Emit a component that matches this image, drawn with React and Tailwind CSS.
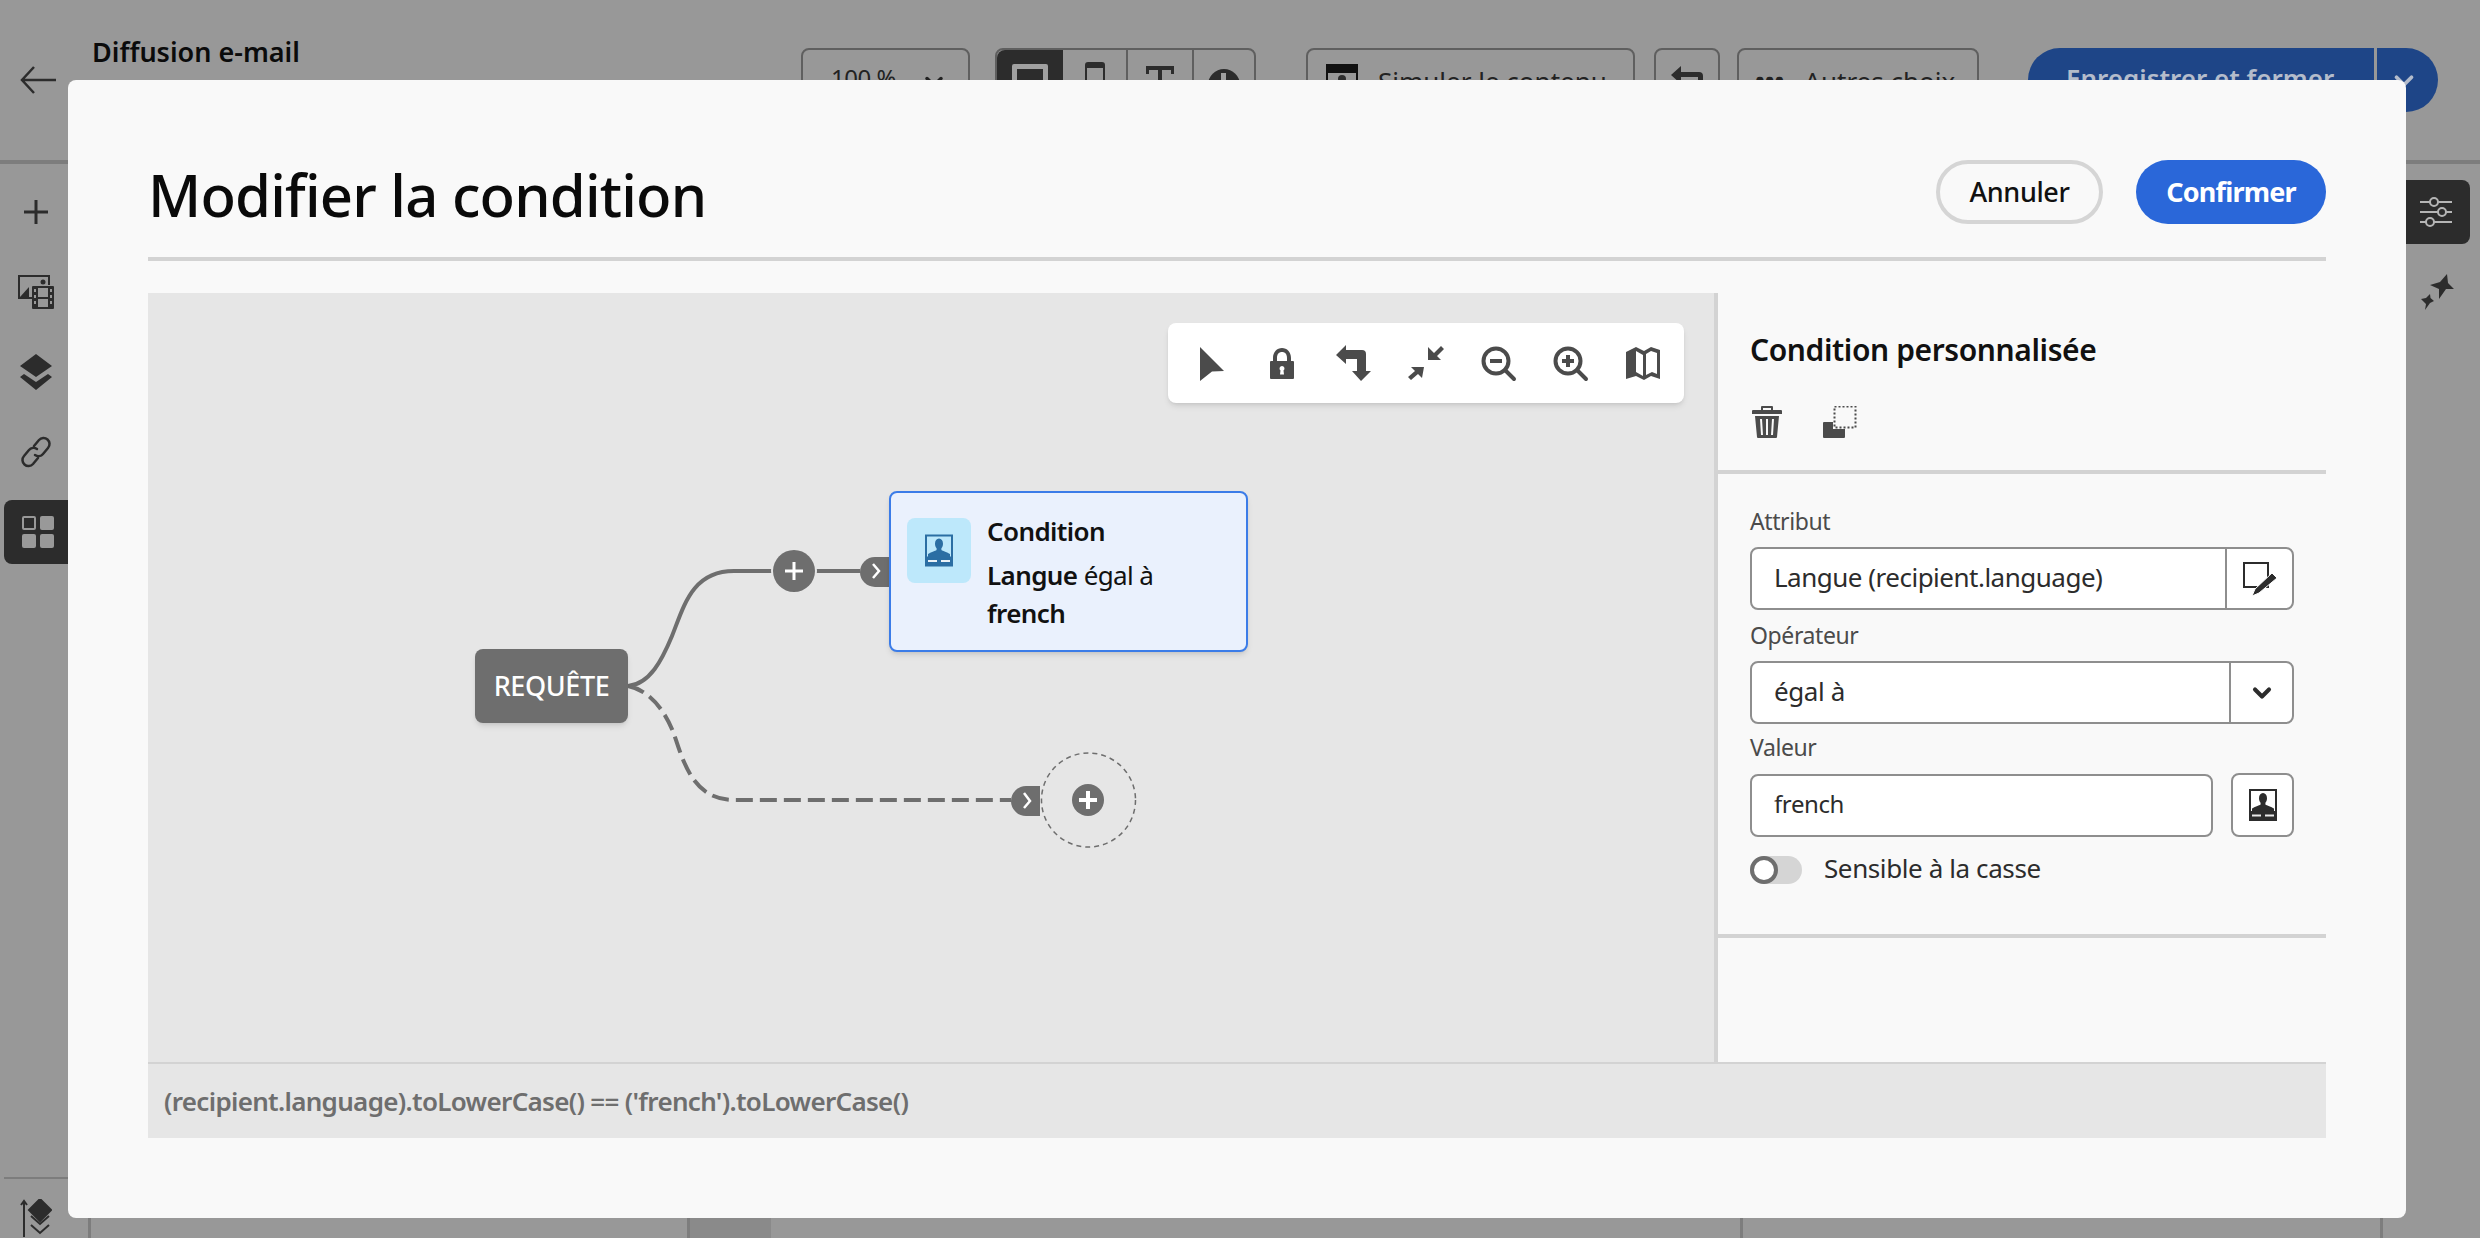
import { ChevronDown } from 'lucide-react';

const font = 'font-["Noto_Sans",sans-serif]';

function CardIcon({ className }) {
  return (
    <svg viewBox="0 0 28 32" className={className} fill="currentColor">
      <path fillRule="evenodd" d="M0 0h28v32H0zM2 2v20h24V2z" />
      <path d="M14 4c2.400 0 4 2.200 4 5.200 0 2-.8 3.800-1.600 4.600v1.600c1.400 1 6 2.400 8.600 4V24H3v-4.600c2.600-1.600 7.200-3 8.600-4v-1.600C10.800 13 10 11.200 10 9.200 10 6.200 11.600 4 14 4z" />
      <path fill="#fff" d="M3 25.500h9v2H3zM16 25.500h9v2h-9z" opacity="0.9" />
    </svg>
  );
}

function ToolbarIcons() {
  return (
    <svg viewBox="1168 323 516 80" className="absolute inset-0 h-full w-full" fill="#4b4b4b">
      <path d="M1200 347l24 24-12 .5-12 9.500z" />
      <path fillRule="evenodd" d="M1273 361v-3c0-6 4-10 9-10s9 4 9 10v3h2a1 1 0 0 1 1 1v16a1 1 0 0 1-1 1h-22a1 1 0 0 1-1-1v-16a1 1 0 0 1 1-1zm4 0h10v-3c0-4-2-6-5-6s-5 2-5 6zm5 5a2.500 2.500 0 0 0-1.500 4.500l-.5 4h4l-.5-4A2.500 2.500 0 0 0 1282 366z" />
      <path d="M1336 355l10-10v5h16a4 4 0 0 1 4 4v17h5l-10 10-9-10h5v-12h-11v5z" />
      <path d="M1428 349v13h13l-4-4 7-7-3-3-7 7zM1424 369h-13l4 4-7 6 3 3 7-6 4 4z" transform="translate(0 -2)" />
      <g fill="none" stroke="#4b4b4b" strokeWidth="4" strokeLinecap="round">
        <circle cx="1496" cy="361" r="12.500" />
        <path d="M1505 370l9 9" />
        <circle cx="1568" cy="361" r="12.500" />
        <path d="M1577 370l9 9" />
      </g>
      <path d="M1490 359h12v4h-12zM1562 359h12v4h-12zM1566 355h4v12h-4z" />
      <path fillRule="evenodd" d="M1626 352l10-5 8 4 7-4 9 3v29l-9-3-7 4-8-4-10 3zm10-1v21l7 4v-21zm15 0l-5 3v21l6-3 5 2v-21z" />
    </svg>
  );
}

function Graph() {
  return (
    <>
      <svg viewBox="148 293 1566 769" className="absolute inset-0 h-full w-full">
        <path d="M628 686C650 684 662 660 672 636C684 606 692 571 734 571H860" fill="none" stroke="#6e6e6e" strokeWidth="4" />
        <path d="M628 686C648 690 664 708 674 734C684 764 694 800 734 800H1011" fill="none" stroke="#6e6e6e" strokeWidth="4" strokeDasharray="17 7" />
        <circle cx="794" cy="571" r="23" fill="#e6e6e6" />
        <circle cx="794" cy="571" r="21" fill="#6e6e6e" />
        <path d="M794 562v18M785 571h18" stroke="#fff" strokeWidth="3" />
        <path d="M889 557h-14a15 15 0 0 0 0 30h14z" fill="#6e6e6e" />
        <path d="M873 564l6 7-6 7" fill="none" stroke="#fff" strokeWidth="2.500" />
        <path d="M1040 786h-14a15 15 0 0 0 0 30h14z" fill="#6e6e6e" />
        <path d="M1024 793l6 8-6 7" fill="none" stroke="#fff" strokeWidth="2.500" />
        <circle cx="1088.500" cy="800" r="47" fill="#e6e6e6" stroke="#6e6e6e" strokeWidth="1.500" strokeDasharray="5 4" />
        <circle cx="1088" cy="800" r="16" fill="#6e6e6e" />
        <path d="M1088 791v18M1079 800h18" stroke="#fff" strokeWidth="4" />
      </svg>
      <div className="absolute left-[327px] top-[356px] flex h-[74px] w-[153px] items-center justify-center rounded-lg bg-[#6e6e6e] text-[27px] font-medium text-white shadow-md">
        REQUÊTE
      </div>
      <div className="absolute left-[741px] top-[198px] flex h-[161px] w-[359px] rounded-lg border-2 border-[#3b7ce8] bg-[#eaf1fd] pl-[16px] shadow-md">
        <div className="mt-[25px] flex h-[65px] w-[64px] items-center justify-center rounded-lg bg-[#bde8fb] text-[#2b6ea3]">
          <CardIcon className="h-[33px] w-[28px]" />
        </div>
        <div className="ml-[16px] pt-[18px] text-[26px] leading-[40px] tracking-[-0.6px] text-[#111]">
          <div className="font-semibold">Condition</div>
          <div className="mt-[4px]">
            <span className="font-semibold">Langue</span> égal à
          </div>
          <div className="-mt-[2px] font-semibold">french</div>
        </div>
      </div>
    </>
  );
}

function Field({ label, className, children }) {
  return (
    <div className={className}>
      <div className="h-[32px] text-[23px] leading-[32px] text-[#4b4b4b]">{label}</div>
      {children}
    </div>
  );
}

function Modal() {
  return (
    <div className="absolute left-[68px] top-[80px] flex h-[1138px] w-[2338px] flex-col rounded-lg bg-[#f9f9f9] px-[80px] pb-[80px] pt-[80px] tracking-[-0.4px]">
      <div className="flex h-[64px] items-center justify-between">
        <h1 className="mt-[6px] text-[58px] font-medium leading-[64px] tracking-[-0.8px] text-[#0a0a0a]">Modifier la condition</h1>
        <div className="flex gap-[33px]">
          <button className="h-[64px] w-[167px] rounded-full border-4 border-[#d5d5d5] text-[27px] font-medium text-[#111]">Annuler</button>
          <button className="h-[64px] w-[190px] rounded-full bg-[#2a67d9] text-[27px] font-bold tracking-[-0.8px] text-white">Confirmer</button>
        </div>
      </div>
      <div className="mt-[33px] h-[4px] bg-[#d3d3d3]" />
      <div className="mt-[32px] flex flex-1">
        <div className="relative w-[1566px] bg-[#e6e6e6]">
          <div className="absolute left-[1020px] top-[30px] h-[80px] w-[516px] rounded-lg bg-white shadow-md">
            <ToolbarIcons />
          </div>
          <Graph />
        </div>
        <div className="flex flex-1 flex-col border-l-4 border-[#d3d3d3]">
          <div className="h-[177px] px-[32px] pt-[36px]">
            <h2 className="text-[30px] font-semibold leading-[42px] text-[#111]">Condition personnalisée</h2>
            <div className="ml-[2px] mt-[35px] flex gap-[41px]">
              <svg viewBox="0 0 30 32" className="h-[32px] w-[30px]" fill="#4b4b4b">
                <path fillRule="evenodd" d="M10 0h10a1 1 0 0 1 1 1v3h8a1 1 0 0 1 1 1v3H0V5a1 1 0 0 1 1-1h8V1a1 1 0 0 1 1-1zm1 2v2h8V2zM3 10h24l-2 21a1 1 0 0 1-1 1H6a1 1 0 0 1-1-1zm5 3l1 16h2l-1-16zm6 0v16h2V13zm6 0l-1 16h2l1-16z" />
              </svg>
              <svg viewBox="0 0 34 32" className="h-[32px] w-[34px]">
                <rect x="11.500" y="0.500" width="21" height="21" fill="none" stroke="#4b4b4b" strokeWidth="2" strokeDasharray="2 2" />
                <path d="M0 17a1 1 0 0 1 1-1h9v7h12v8a1 1 0 0 1-1 1H1a1 1 0 0 1-1-1z" fill="#4b4b4b" />
              </svg>
            </div>
          </div>
          <div className="h-[4px] bg-[#d3d3d3]" />
          <div className="h-[460px] pl-[32px] pr-[32px] pt-[31px] text-[26px] text-[#2c2c2c]">
            <Field label="Attribut">
              <div className="mt-[10px] flex h-[63px] items-center rounded-lg border-2 border-[#8e8e8e] bg-white">
                <div className="-mt-[2px] flex-1 pl-[22px] tracking-[-0.5px]">Langue (recipient.language)</div>
                <div className="flex h-full w-[67px] items-center justify-center border-l-2 border-[#8e8e8e]">
                  <svg viewBox="0 0 34 34" className="h-[34px] w-[34px]">
                    <path d="M1 1h24v24H1z" fill="none" stroke="#2c2c2c" strokeWidth="2" />
                    <path d="M29 11l5 5-18 15-7 3 3-7z" fill="#2c2c2c" stroke="#fff" strokeWidth="1" />
                  </svg>
                </div>
              </div>
            </Field>
            <Field label="Opérateur" className="mt-[9px]">
              <div className="mt-[10px] flex h-[63px] items-center rounded-lg border-2 border-[#8e8e8e] bg-white">
                <div className="-mt-[3px] flex-1 pl-[22px]">égal à</div>
                <div className="flex h-full w-[63px] items-center justify-center border-l-2 border-[#8e8e8e]">
                  <ChevronDown className="h-[28px] w-[28px] text-[#2c2c2c]" strokeWidth={3.5} />
                </div>
              </div>
            </Field>
            <Field label="Valeur" className="mt-[7px]">
              <div className="mt-[10px] flex items-start gap-[18px]">
                <div className="mt-[1px] flex h-[63px] w-[463px] items-center rounded-lg border-2 border-[#8e8e8e] bg-white pb-[3px] pl-[22px] text-[24px]">french</div>
                <div className="flex h-[64px] w-[63px] items-center justify-center rounded-lg border-2 border-[#8e8e8e] bg-white text-[#2c2c2c]">
                  <CardIcon className="h-[32px] w-[28px]" />
                </div>
              </div>
            </Field>
            <div className="mt-[19px] flex h-[28px] items-center">
              <div className="h-[28px] w-[52px] rounded-full bg-[#d5d5d5]">
                <div className="h-[28px] w-[28px] rounded-full border-4 border-[#6e6e6e] bg-white" />
              </div>
              <span className="-mt-[3px] ml-[22px] text-[26px]">Sensible à la casse</span>
            </div>
          </div>
          <div className="h-[4px] bg-[#d3d3d3]" />
        </div>
      </div>
      <div className="flex h-[76px] items-center border-t-2 border-[#d3d3d3] bg-[#e6e6e6] pl-[16px] text-[26px] font-semibold tracking-[-0.68px] text-[#6e6e6e]">
        (recipient.language).toLowerCase() == ('french').toLowerCase()
      </div>
    </div>
  );
}

function Background() {
  return (
    <div className="flex h-full flex-col">
      <div className="flex h-[164px] border-b-4 border-[#7d7d7d] pl-[20px]">
        <svg viewBox="0 0 36 28" className="mt-[66px] h-[28px] w-[36px]" fill="none" stroke="#2c2c2c" strokeWidth="2.500">
          <path d="M36 14H2M14 1L2 14l12 13" />
        </svg>
        <div className="ml-[36px] mt-[32px] w-[709px] text-[27px] font-semibold leading-[40px] text-[#0b0b0b]">Diffusion e-mail</div>
        <div className="mt-[48px] flex h-[64px] w-[169px] items-start justify-center gap-[24px] rounded-lg border-2 border-[#5f5f5f] pl-[8px] pt-[12px] text-[24px] leading-[32px] tracking-[-0.5px] text-[#222]">
          100 %
          <ChevronDown className="mt-[6px] h-[28px] w-[28px]" strokeWidth={3} />
        </div>
        <div className="ml-[25px] mt-[48px] flex h-[64px] w-[261px] rounded-lg border-2 border-[#5f5f5f]">
          <div className="flex w-[66px] justify-center rounded-l-lg bg-[#2c2c2c] pt-[14px]">
            <div className="h-[30px] w-[36px] rounded-[2px] border-[5px] border-[#a0a0a0] bg-[#2c2c2c]" />
          </div>
          <div className="flex w-[65px] justify-center border-r-2 border-[#5f5f5f] pt-[12px]">
            <div className="h-[34px] w-[20px] rounded-[3px] border-2 border-t-[6px] border-[#2c2c2c]" />
          </div>
          <div className="flex w-[66px] justify-center border-r-2 border-[#5f5f5f] pt-[16px]">
            <svg viewBox="0 0 28 30" className="h-[30px] w-[28px]" fill="#2c2c2c">
              <path d="M0 0h28v8h-3V4h-9v26h-4V4H3v4H0z" />
            </svg>
          </div>
          <div className="flex flex-1 justify-center pt-[19px]">
            <svg viewBox="0 0 32 32" className="h-[32px] w-[32px]">
              <circle cx="16" cy="16" r="16" fill="#2c2c2c" />
              <path d="M13 4h5v8h-5z" fill="#a0a0a0" />
            </svg>
          </div>
        </div>
        <div className="ml-[50px] mt-[48px] flex h-[64px] w-[329px] gap-[20px] rounded-lg border-2 border-[#5f5f5f] pl-[18px] pt-[12px] text-[26px] text-[#222]">
          <svg viewBox="0 0 32 34" className="mt-[2px] h-[34px] w-[32px]">
            <path d="M0 0h32v8H0z" fill="#111" />
            <path d="M1 8h30v26H1z" fill="none" stroke="#111" strokeWidth="2" />
            <circle cx="16" cy="15" r="4" fill="#2c2c2c" />
          </svg>
          Simuler le contenu
        </div>
        <div className="ml-[19px] mt-[48px] h-[64px] w-[66px] rounded-lg border-2 border-[#5f5f5f] pl-[15px] pt-[16px]">
          <svg viewBox="0 0 32 30" className="h-[30px] w-[32px]" fill="#2c2c2c">
            <path d="M0 9L10 0v6h18a4 4 0 0 1 4 4v20h-5V11H10v7z" />
          </svg>
        </div>
        <div className="ml-[17px] mt-[48px] flex h-[64px] w-[242px] gap-[20px] rounded-lg border-2 border-[#5f5f5f] pl-[16px] pt-[12px] text-[26px] text-[#222]">
          <span className="font-bold">•••</span>
          Autres choix
        </div>
        <div className="ml-[49px] mt-[48px] flex h-[64px]">
          <div className="w-[346px] rounded-l-full bg-[#1e4587] pl-[38px] pt-[11px] text-[26px] font-semibold text-[#b4bccb]">Enregistrer et fermer</div>
          <div className="ml-[3px] w-[61px] rounded-r-full bg-[#1e4587] pl-[12px] pt-[18px] text-[#b4bccb]">
            <ChevronDown className="h-[30px] w-[30px]" strokeWidth={3} />
          </div>
        </div>
      </div>
      <div className="flex flex-1">
        <div className="flex w-[91px] flex-col gap-[16px] border-r-[3px] border-[#7d7d7d] pl-[4px] pt-[16px] text-[#2c2c2c]">
          <div className="flex h-[64px] w-[64px] items-center justify-center">
            <svg viewBox="0 0 24 24" className="h-[24px] w-[24px]" fill="currentColor">
              <path d="M10.500 0h3v10.500H24v3H13.500V24h-3V13.500H0v-3h10.500z" />
            </svg>
          </div>
          <div className="flex h-[64px] w-[64px] items-center justify-center">
            <svg viewBox="0 0 36 34" className="h-[34px] w-[36px]" fill="currentColor">
              <path d="M0 0h32v10h-2V2H2v20h12v2H0z" />
              <path d="M2 22l9-10v10z" />
              <circle cx="25" cy="7" r="2.500" />
              <path fillRule="evenodd" d="M15 11h20a1 1 0 0 1 1 1v21a1 1 0 0 1-1 1H15a1 1 0 0 1-1-1V12a1 1 0 0 1 1-1zm5 2v9h10v-9zm0 11v8h10v-8zm-4-10v3h2v-3zm0 6v3h2v-3zm0 6v3h2v-3zm16-12v3h2v-3zm0 6v3h2v-3zm0 6v3h2v-3z" />
            </svg>
          </div>
          <div className="flex h-[64px] w-[64px] items-center justify-center">
            <svg viewBox="0 0 32 36" className="h-[36px] w-[32px]" fill="currentColor">
              <path d="M16 0l16 12-16 11L0 12zM4 20l12 8 12-8 4 3-16 13L0 23z" />
            </svg>
          </div>
          <div className="flex h-[64px] w-[64px] items-center justify-center">
            <svg viewBox="0 0 32 32" className="h-[32px] w-[32px]" fill="none" stroke="currentColor" strokeWidth="2.500" strokeLinecap="round">
              <path d="M14 10l5-6a6 6 0 0 1 9 8l-5 6a6 6 0 0 1-8 1" />
              <path d="M18 22l-5 6a6 6 0 0 1-9-8l5-6a6 6 0 0 1 8-1" />
            </svg>
          </div>
          <div className="grid h-[64px] w-[64px] grid-cols-2 content-center justify-center gap-[4px] rounded-l-lg bg-[#2c2c2c] pl-[18px] pr-[14px]">
            <div className="h-[14px] w-[14px] rounded-[2px] border-2 border-[#999]" />
            <div className="h-[14px] w-[14px] rounded-[2px] bg-[#999]" />
            <div className="h-[14px] w-[14px] rounded-[2px] bg-[#999]" />
            <div className="h-[14px] w-[14px] rounded-[2px] bg-[#999]" />
          </div>
          <div className="mt-auto flex h-[61px] w-[64px] justify-center border-t-[2px] border-[#7d7d7d] pt-[20px]">
            <svg viewBox="0 0 32 38" className="h-[38px] w-[32px]" fill="none" stroke="#2c2c2c" strokeWidth="2">
              <path d="M4 38V2M1 6l3-4 3 4" />
              <path d="M20 0l11 11-11 11L9 11z" fill="#2c2c2c" />
              <path d="M11 17l9 8 9-8M11 26l9 8 9-8" />
            </svg>
          </div>
        </div>
        <div className="w-[599px] border-r-[3px] border-[#7d7d7d]" />
        <div className="w-[81px] bg-[#8a8a8a]" />
        <div className="w-[972px] border-r-[3px] border-[#7d7d7d]" />
        <div className="w-[640px] border-r-[3px] border-[#7d7d7d]" />
        <div className="flex-1 pl-[23px] pt-[16px]">
          <div className="flex h-[64px] w-[64px] items-center justify-center rounded-r-lg bg-[#2c2c2c] pr-[4px]">
            <svg viewBox="0 0 32 32" className="h-[32px] w-[32px]" fill="none" stroke="#b5b5b5" strokeWidth="2">
              <path d="M0 6h10M18 6h14M0 16h18M26 16h6M0 26h6M14 26h18" />
              <circle cx="14" cy="6" r="4" />
              <circle cx="22" cy="16" r="4" />
              <circle cx="10" cy="26" r="4" />
            </svg>
          </div>
          <svg viewBox="0 0 34 36" className="ml-[15px] mt-[30px] h-[36px] w-[34px]" fill="#2c2c2c">
            <path d="M26 0L27 9L33 15L25 15L18 25L18 15L9 11L19 8z" />
            <path d="M9 20L9.500 24L13 27L9 29L4 36L5 30L0 25L5 24z" />
          </svg>
        </div>
      </div>
    </div>
  );
}

export default function App() {
  return (
    <div className={`relative h-[1238px] w-[2480px] overflow-hidden bg-[#989898] ${font}`}>
      <Background />
      <Modal />
    </div>
  );
}
